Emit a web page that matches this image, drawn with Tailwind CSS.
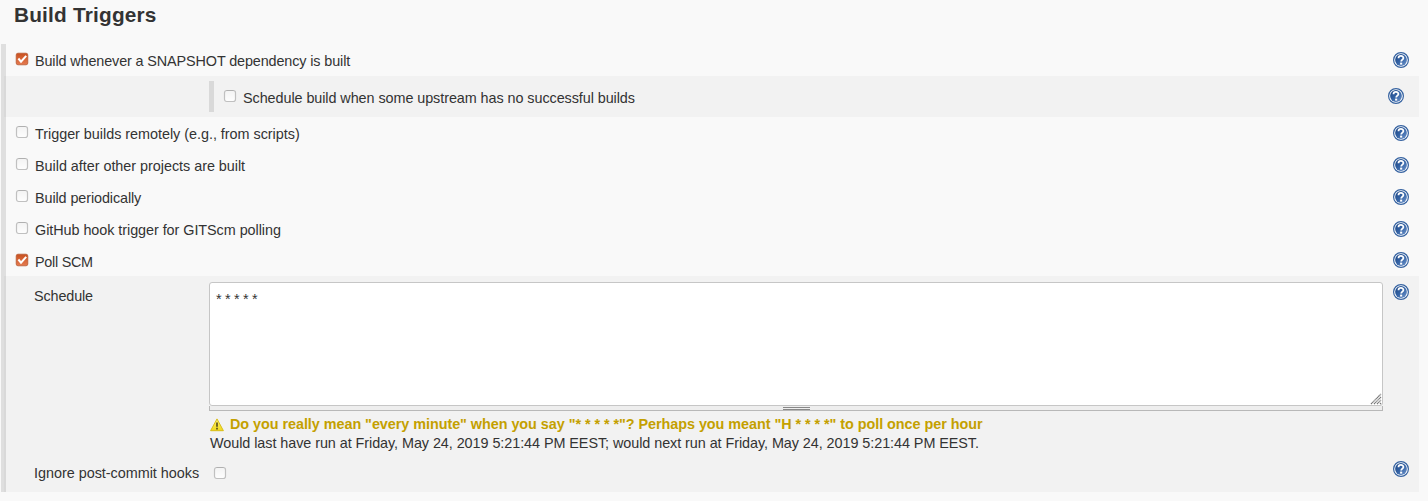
<!DOCTYPE html>
<html lang="en">
<head>
<meta charset="utf-8">
<title>Build Triggers</title>
<script src="https://cdn.jsdelivr.net/npm/@tailwindcss/browser@4"></script>
</head>
<body class="bg-[#f9f9f9] text-[#333] text-[14.4px] leading-[18px] font-['Liberation_Sans',Arial,sans-serif] h-[501px] overflow-hidden whitespace-nowrap">
<svg class="absolute size-0" aria-hidden="true">
  <defs>
    <linearGradient id="blue" x1="0" y1="0" x2="1" y2="1"><stop offset="0" stop-color="#1c4583"/><stop offset=".5" stop-color="#3463a5"/><stop offset="1" stop-color="#7196cc"/></linearGradient>
    <linearGradient id="orange" x1="0" y1="0" x2="0" y2="1"><stop offset="0" stop-color="#c8501f"/><stop offset="1" stop-color="#e57b50"/></linearGradient>
    <linearGradient id="box" x1="0" y1="0" x2="0" y2="1"><stop offset="0" stop-color="#f3f3f3"/><stop offset="1" stop-color="#fefefe"/></linearGradient>
    <linearGradient id="yellow" x1="0" y1="0" x2="0" y2="1"><stop offset="0" stop-color="#fff06a"/><stop offset="1" stop-color="#f0d91c"/></linearGradient>
    <symbol id="help" viewBox="0 0 16 16">
      <circle cx="8" cy="8" r="7.4" fill="#fff" stroke="#3562a0" stroke-width="1.2"/>
      <circle cx="8" cy="8" r="5.9" fill="url(#blue)"/>
      <path d="M5.5 6.2C5.5 3.3 10.4 3.2 10.4 5.9c0 1.7-2.2 1.7-2.2 3.6" fill="none" stroke="#fff" stroke-width="1.8"/>
      <rect x="7.1" y="10.6" width="2.1" height="2" fill="#fff"/>
    </symbol>
    <symbol id="off" viewBox="0 0 14 14">
      <rect x="1.5" y="1.5" width="11" height="11" rx="2.2" fill="url(#box)" stroke="#c0c0c0" stroke-width="1.2"/>
      <path d="M3.5 1.5h7" stroke="#b0b0b0"/>
    </symbol>
    <symbol id="on" viewBox="0 0 14 14">
      <rect x="1.2" y="1.2" width="11.6" height="11.6" rx="1.8" fill="url(#orange)" stroke="#b5562f" stroke-opacity=".75"/>
      <path d="M3.4 6.5l2.6 3.1L11.2 3.8" fill="none" stroke="#fff" stroke-width="2"/>
    </symbol>
  </defs>
</svg>
<h1 class="h-11 pl-[14px] pt-[3px] text-[20.8px] tracking-[0.2px] leading-6 font-bold">Build Triggers</h1>
<main class="ml-px w-[1418px] h-[448px] border-l-[5px] border-[#dfdfdf]">
  <div class="flex h-8 pl-[9px] pr-[10px]">
    <svg class="size-[14px] mt-2"><use href="#on"/></svg><label class="ml-[6px] mt-2 tracking-[-0.12px]">Build whenever a SNAPSHOT dependency is built</label><svg class="size-4 ml-auto mt-2"><use href="#help"/></svg>
  </div>
  <div class="flex h-[41px] -ml-[2px] pl-[205px] pr-[15px] bg-[#f2f2f2] border-l-2 border-[#d9d9d9]">
    <div class="w-[5px] h-[31px] mt-[5px] -ml-[2px] bg-[#d9d9d9]"></div>
    <svg class="size-[14px] ml-[9px] mt-[13px]"><use href="#off"/></svg><label class="ml-[6px] mt-[13px] tracking-[-0.07px]">Schedule build when some upstream has no successful builds</label><svg class="size-4 ml-auto mt-3"><use href="#help"/></svg>
  </div>
  <div class="flex h-8 pl-[9px] pr-[10px]">
    <svg class="size-[14px] mt-2"><use href="#off"/></svg><label class="ml-[6px] mt-2 tracking-[-0.025px]">Trigger builds remotely (e.g., from scripts)</label><svg class="size-4 ml-auto mt-2"><use href="#help"/></svg>
  </div>
  <div class="flex h-8 pl-[9px] pr-[10px]">
    <svg class="size-[14px] mt-2"><use href="#off"/></svg><label class="ml-[6px] mt-2 tracking-[-0.03px]">Build after other projects are built</label><svg class="size-4 ml-auto mt-2"><use href="#help"/></svg>
  </div>
  <div class="flex h-8 pl-[9px] pr-[10px]">
    <svg class="size-[14px] mt-2"><use href="#off"/></svg><label class="ml-[6px] mt-2 tracking-[-0.1px]">Build periodically</label><svg class="size-4 ml-auto mt-2"><use href="#help"/></svg>
  </div>
  <div class="flex h-8 pl-[9px] pr-[10px]">
    <svg class="size-[14px] mt-2"><use href="#off"/></svg><label class="ml-[6px] mt-2 tracking-[-0.055px]">GitHub hook trigger for GITScm polling</label><svg class="size-4 ml-auto mt-2"><use href="#help"/></svg>
  </div>
  <div class="flex h-[31px] pl-[9px] pr-[10px]">
    <svg class="size-[14px] mt-2"><use href="#on"/></svg><label class="ml-[6px] mt-2 tracking-[-0.27px]">Poll SCM</label><svg class="size-4 ml-auto mt-[7px]"><use href="#help"/></svg>
  </div>
  <div class="h-[216px] -ml-[2px] bg-[#f2f2f2] border-l-2 border-[#d9d9d9] pr-[10px]">
    <div class="flex h-[181px]">
      <label class="w-[203px] pl-7 pt-[11px] tracking-[-0.13px]">Schedule</label>
      <div class="w-[1174px] pt-[6px]">
        <div class="relative h-[124px] bg-white border border-[#c6c6c6] rounded-[3px] pl-[6px] pt-[7px] tracking-[-0.3px]">* * * * *
          <svg class="absolute right-0 bottom-0 size-3" viewBox="0 0 12 12"><path d="M1 11L11 1M4 11L11 4M7 11L11 7M10 11L11 10" stroke="#777" stroke-width="1.2" stroke-dasharray="1.4 .3"/></svg>
        </div>
        <div class="h-[5px] flex justify-center items-center border border-t-0 border-[#b8b8b8] bg-[#eee]"><div class="w-[27px] h-[3px] border-y border-[#888]"></div></div>
        <div class="flex mt-1 font-bold text-[#c4a000]">
          <svg class="w-4 h-4 mt-[2px]" viewBox="0 0 16 16"><path d="M8 1.9L14.4 13.7H1.6z" fill="url(#yellow)" stroke="#d8bd18" stroke-linejoin="round"/><path d="M8 5.5v4.3M8 10.8v1.6" stroke="#443b18" stroke-width="1.5"/></svg>
          <span class="ml-[4px] pl-px tracking-[-0.045px]">Do you really mean "every minute" when you say "* * * * *"? Perhaps you meant "H * * * *" to poll once per hour</span>
        </div>
        <div class="mt-px pl-px tracking-[-0.06px]">Would last have run at Friday, May 24, 2019 5:21:44 PM EEST; would next run at Friday, May 24, 2019 5:21:44 PM EEST.</div>
      </div>
      <svg class="size-4 ml-auto mt-2"><use href="#help"/></svg>
    </div>
    <div class="flex">
      <label class="w-[207px] pl-7 pt-[7px] tracking-[-0.02px]">Ignore post-commit hooks</label>
      <svg class="size-[14px] mt-[9px]"><use href="#off"/></svg>
      <svg class="size-4 ml-auto mt-1"><use href="#help"/></svg>
    </div>
  </div>
</main>
</body>
</html>
